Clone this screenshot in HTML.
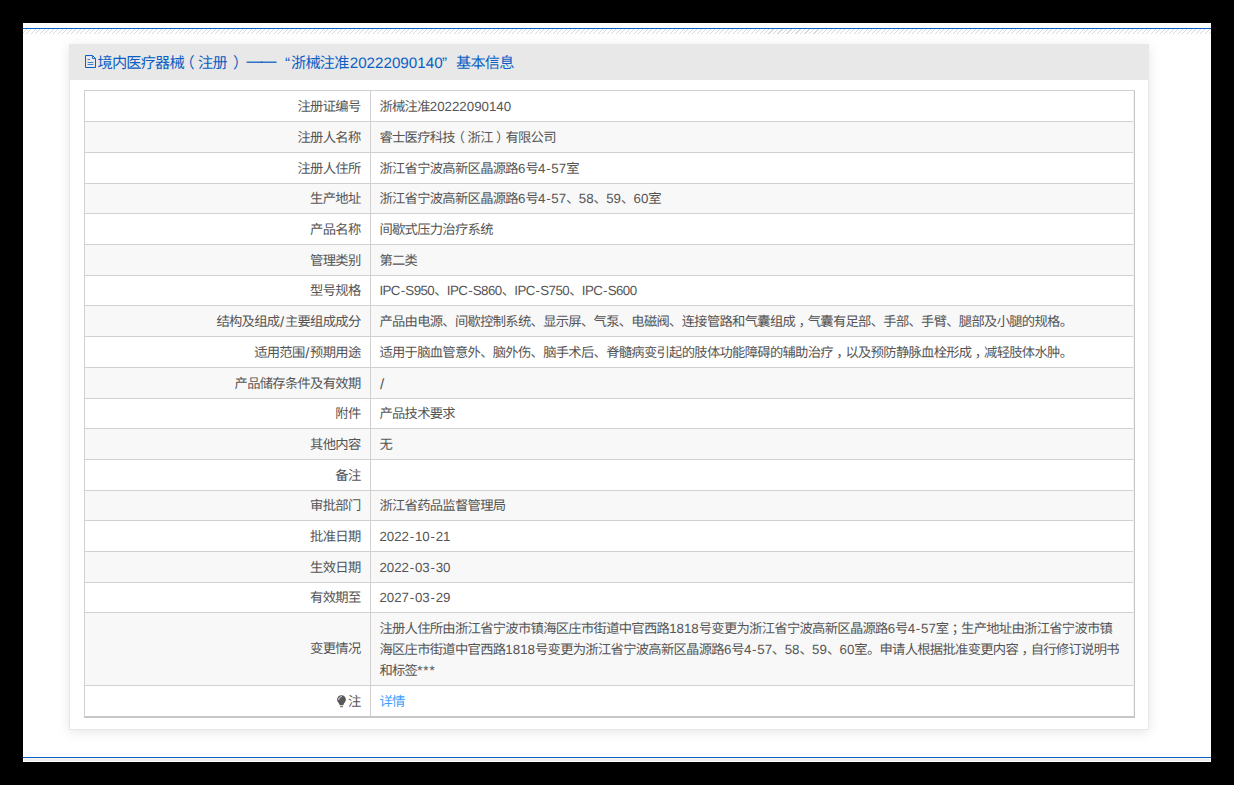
<!DOCTYPE html>
<html lang="zh-CN">
<head>
<meta charset="utf-8">
<title>境内医疗器械（注册）基本信息</title>
<style>
html,body{margin:0;padding:0;}
body{width:1234px;height:785px;background:#000;overflow:hidden;position:relative;font-family:"Liberation Sans",sans-serif;font-size:13.3px;letter-spacing:-0.7px;color:#555;text-rendering:geometricPrecision;}
.page{position:absolute;left:23px;top:23px;width:1188px;height:739px;background:#fff;overflow:hidden;}
.tl{position:absolute;left:0;top:5px;width:100%;height:1px;background:#0a62c8;}
.hatch{position:absolute;left:0;top:6px;width:100%;height:5px;background:repeating-linear-gradient(135deg,#fff 0,#fff 2.45px,#d8d8d8 2.45px,#d8d8d8 3.18px);}
.bl{position:absolute;left:0;top:734px;width:100%;height:1px;background:#0a62c8;}
.bc{position:absolute;left:0;top:735px;width:1187px;height:1px;background:#fdf6ee;}
.bg{position:absolute;left:1px;top:736px;width:1186px;height:2px;background:#eee;}
.panel{position:absolute;left:46px;top:21px;width:1078px;height:684px;border:1px solid #e7e7e7;background:#fff;box-shadow:0 2px 11px rgba(0,0,0,.1);}
.hd{position:absolute;left:-1px;top:-1px;width:1080px;height:36px;background:#e8e8e8;color:#0b5fc4;font-size:14.2px;line-height:36px;white-space:nowrap;}
.hd svg{position:absolute;left:16px;top:11px;}
.hd .h{position:absolute;top:1.8px;font-size:15.2px;letter-spacing:-0.8px;}
.hd .hl{letter-spacing:0;}
.tb{position:absolute;left:14px;top:45px;width:1051px;height:628px;}
.r{position:absolute;left:0;width:1048px;border-top:1px solid #d2d0d0;border-left:1px solid #d2d0d0;box-sizing:content-box;background:#fff;}
.r.g{background:#f8f8f8;}
.k,.v{position:absolute;top:0;bottom:0;white-space:nowrap;}
.k{left:0;width:275.5px;padding-right:9.5px;text-align:right;border-right:1px solid #d2d0d0;}
.v{left:286px;right:0;padding-left:8.4px;}
.r.m .v{line-height:21.15px;padding-top:5px;}
.v a{color:#409eff;}
.l{letter-spacing:0;}
.ipc .l{letter-spacing:-0.54px;}
.l i{font-style:normal;margin:0 0.75px;}
.l i.sl{margin:0 0.7px;font-size:15px;position:relative;top:0.5px;}
.bb{position:absolute;left:0;top:626px;width:1051px;height:2px;background:#c9c6c7;}
.bt{position:absolute;left:0;top:0;width:1051px;height:1px;background:#d2d0d0;}
.br{position:absolute;left:1049px;top:1px;width:1px;height:625px;background:#f1f1f9;border-right:1px solid #c8c5c7;}
.m .v .l:last-child{letter-spacing:1px;}
.cm{position:relative;left:3.4px;}
.pl{position:relative;left:-3.2px;}
.pr{position:relative;left:3.2px;}
.bulb{vertical-align:-2px;margin-right:1px;}
</style>
</head>
<body>
<div class="page">
<div class="tl"></div><div class="hatch"></div>
<div class="panel">
<div class="hd"><svg width="12" height="14" viewBox="0 0 12 14" fill="none" stroke="#0b5fc4" stroke-width="1"><path d="M0.5 0.5h7l3 3v9h-10z"/><path d="M7.5 0.5v3h3" opacity=".85"/><path d="M2.6 4.5h2.4M2.6 7.5h5.8M2.6 9.5h5.8" opacity=".75"/></svg><span class="h" style="left:28.5px">境内医疗器械</span><span class="h" style="left:110.4px">（</span><span class="h" style="left:129px">注册</span><span class="h" style="left:164px">）</span><span class="h" style="left:177.7px;top:0.1px;-webkit-text-stroke:0.35px #0b5fc4">——</span><span class="h" style="left:216px">“</span><span class="h" style="left:222px">浙械注准</span><span class="h hl" style="left:280.7px">20222090140</span><span class="h" style="left:373px">”</span><span class="h" style="left:387px">基本信息</span></div>
<div class="tb">
<div class="r" style="top:0px;height:31px;line-height:31px"><div class="k">注册证编号</div><div class="v">浙械注准<span class="l">20222090140</span></div></div>
<div class="r g" style="top:31px;height:31px;line-height:31px"><div class="k">注册人名称</div><div class="v">睿士医疗科技<span class="pl">（</span>浙江<span class="pr">）</span>有限公司</div></div>
<div class="r" style="top:62px;height:31px;line-height:31px"><div class="k">注册人住所</div><div class="v">浙江省宁波高新区晶源路<span class="l">6</span>号<span class="l">4<i>-</i>57</span>室</div></div>
<div class="r g" style="top:93px;height:30px;line-height:30px"><div class="k">生产地址</div><div class="v">浙江省宁波高新区晶源路<span class="l">6</span>号<span class="l">4<i>-</i>57</span>、<span class="l">58</span>、<span class="l">59</span>、<span class="l">60</span>室</div></div>
<div class="r" style="top:123px;height:31px;line-height:31px"><div class="k">产品名称</div><div class="v">间歇式压力治疗系统</div></div>
<div class="r g" style="top:154px;height:31px;line-height:31px"><div class="k">管理类别</div><div class="v">第二类</div></div>
<div class="r ipc" style="top:185px;height:30px;line-height:30px"><div class="k">型号规格</div><div class="v"><span class="l">IPC<i>-</i>S950</span>、<span class="l">IPC<i>-</i>S860</span>、<span class="l">IPC<i>-</i>S750</span>、<span class="l">IPC<i>-</i>S600</span></div></div>
<div class="r g" style="top:215px;height:31px;line-height:31px"><div class="k">结构及组成<span class="l"><i class="sl">/</i></span>主要组成成分</div><div class="v">产品由电源、间歇控制系统、显示屏、气泵、电磁阀、连接管路和气囊组成<span class="cm">，</span>气囊有足部、手部、手臂、腿部及小腿的规格。</div></div>
<div class="r" style="top:246px;height:31px;line-height:31px"><div class="k">适用范围<span class="l"><i class="sl">/</i></span>预期用途</div><div class="v">适用于脑血管意外、脑外伤、脑手术后、脊髓病变引起的肢体功能障碍的辅助治疗<span class="cm">，</span>以及预防静脉血栓形成<span class="cm">，</span>减轻肢体水肿。</div></div>
<div class="r g" style="top:277px;height:31px;line-height:31px"><div class="k">产品储存条件及有效期</div><div class="v"><span class="l"><i class="sl">/</i></span></div></div>
<div class="r" style="top:308px;height:30px;line-height:30px"><div class="k">附件</div><div class="v">产品技术要求</div></div>
<div class="r g" style="top:338px;height:31px;line-height:31px"><div class="k">其他内容</div><div class="v">无</div></div>
<div class="r" style="top:369px;height:31px;line-height:31px"><div class="k">备注</div><div class="v"></div></div>
<div class="r g" style="top:400px;height:30px;line-height:30px"><div class="k">审批部门</div><div class="v">浙江省药品监督管理局</div></div>
<div class="r dt" style="top:430px;height:31px;line-height:31px"><div class="k">批准日期</div><div class="v"><span class="l">2022<i>-</i>10<i>-</i>21</span></div></div>
<div class="r g dt" style="top:461px;height:31px;line-height:31px"><div class="k">生效日期</div><div class="v"><span class="l">2022<i>-</i>03<i>-</i>30</span></div></div>
<div class="r dt" style="top:492px;height:30px;line-height:30px"><div class="k">有效期至</div><div class="v"><span class="l">2027<i>-</i>03<i>-</i>29</span></div></div>
<div class="r g m" style="top:522px;height:73px;line-height:72px"><div class="k">变更情况</div><div class="v">注册人住所由浙江省宁波市镇海区庄市街道中官西路<span class="l">1818</span>号变更为浙江省宁波高新区晶源路<span class="l">6</span>号<span class="l">4<i>-</i>57</span>室<span class="cm">；</span>生产地址由浙江省宁波市镇<br>海区庄市街道中官西路<span class="l">1818</span>号变更为浙江省宁波高新区晶源路<span class="l">6</span>号<span class="l">4<i>-</i>57</span>、<span class="l">58</span>、<span class="l">59</span>、<span class="l">60</span>室。申请人根据批准变更内容<span class="cm">，</span>自行修订说明书<br>和标签<span class="l">***</span></div></div>
<div class="r" style="top:595px;height:31px;line-height:31px"><div class="k"><svg class="bulb" width="10" height="13" viewBox="0 0 10 13"><path d="M4.5 0.2C1.9 0.2 0.1 2.2 0.1 4.6c0 1.6 0.8 2.6 1.5 3.5c0.5 0.7 0.9 1.3 1 2.2h3.8c0.1-0.9 0.5-1.5 1-2.2c0.7-0.9 1.5-1.9 1.5-3.5C8.9 2.2 7.1 0.2 4.5 0.2z" fill="#58585a"/><rect x="3.1" y="11.2" width="2.9" height="1" fill="#58585a"/><path d="M1.7 4.6C1.7 3 2.8 1.9 4.4 1.7" stroke="#fff" stroke-width="1" fill="none" stroke-linecap="round" opacity=".95"/></svg>注</div><div class="v"><a>详情</a></div></div>
<div class="bt"></div><div class="br"></div><div class="bb"></div>
</div>
</div>
<div class="bl"></div><div class="bc"></div><div class="bg"></div>
</div>
</body>
</html>
